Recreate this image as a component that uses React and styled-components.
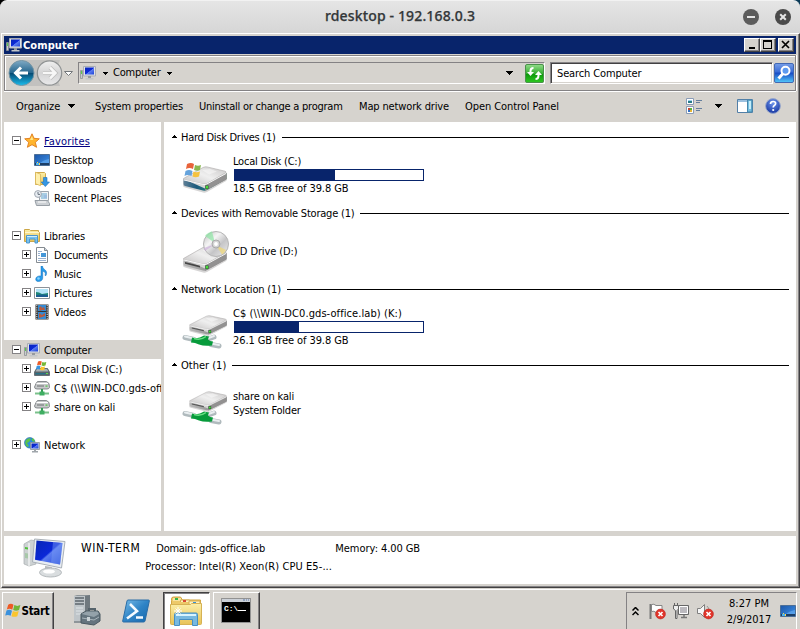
import React from 'react';
import styled, { createGlobalStyle, css } from 'styled-components';

const face = '#d6d3ce';
const navy = '#08246b';

const Global = createGlobalStyle`
  * { box-sizing: border-box; }
  html, body { margin: 0; padding: 0; background: #000; overflow: hidden; }
  body { font: 11px/14px "DejaVu Sans Condensed", "DejaVu Sans", sans-serif; font-stretch: condensed; color: #000; white-space: nowrap; }
  svg { display: block; flex: none; }
`;

const Desktop = styled.div`
  width: 800px; height: 629px; display: flex; flex-direction: column;
  background: ${face}; overflow: hidden;
`;
const HostBackdrop = styled.div`
  background: linear-gradient(90deg, #000 50%, #0b3a57 50%); height: 33px; flex: none;
`;
const HostBar = styled.header`
  height: 33px; border-radius: 7px 7px 0 0; padding: 0 9px 0 54px;
  border-top: 1px solid #f2f2f2;
  background: linear-gradient(#e5e5e5, #d6d6d6);
  display: grid; grid-template-columns: 1fr 50px; align-items: center;
`;
const HostTitle = styled.h1`
  margin: 0; padding: 0 0 2px 5px; text-align: center; color: #333739;
  font: 500 14px/20px "Noto Sans", "Open Sans", sans-serif;
  -webkit-text-stroke: 0.25px #333739; letter-spacing: 0.15px;
`;
const HostButtons = styled.div`display: flex; justify-content: space-between; margin-left: 2px;`;

const Window = styled.main`
  height: 555px; flex: none; padding: 2px; display: flex; flex-direction: column;
  border-style: solid; border-width: 1px;
  border-color: #fff #424142 #424142 #fff;
  box-shadow: inset -1px -1px #848284;
  margin-left: 1px; background: ${face};
`;
const Caption = styled.div`
  height: 18px; margin: 0 1px 0 0; flex: none; background: ${navy}; color: #fff; display: flex; align-items: center; padding: 0 2px;
  font-weight: 700;
`;
const CaptionText = styled.span`flex: 1; padding: 2px 0 0 1px; letter-spacing: 0.1px;`;
const CaptionButton = styled.button`
  width: 16px; height: 14px; padding: 0; background: ${face};
  border: 1px solid; border-color: #fff #424142 #424142 #fff;
  box-shadow: inset -1px -1px #848284; margin-left: ${p => p.$gap || 0}px;
  display: flex; align-items: center; justify-content: center;
`;
const AddressBand = styled.div`
  height: 36px; margin: 1px 1px 0 0; flex: none; display: flex; align-items: center;
  border: 1px solid #848284; box-shadow: inset 1px 1px #fff, 0 1px #fff, 1px 0 #fff;
  padding-left: 3px;
`;
const AddressField = styled.div`
  width: 467px; height: 22px; margin-left: 4px; display: flex; align-items: center;
  border: 1px solid; border-color: #848284 #fff #fff #848284; padding-left: 1px;
`;
const AddressText = styled.span`width: 49px; letter-spacing: -0.2px;`;
const Gap = styled.i`width: ${p => p.$w}px; flex: none;`;
const Stretch = styled.i`flex: 1;`;
const SearchField = styled.div`
  width: 223px; height: 22px; margin-left: 5px; background: #fff; padding: 4px 6px 0; letter-spacing: -0.13px;
  border: 1px solid; border-color: #848284 #fff #fff #848284; box-shadow: inset 1px 1px #424142, inset -1px -1px ${face};
`;
const CommandBar = styled.nav`
  height: 31px; flex: none; display: flex; align-items: center; padding: 0 16px 1px 12px;
`;
const Command = styled.span`width: ${p => p.$w}px; padding-top: 1px; letter-spacing: ${p => p.$ls || 0}px; flex: none;`;

const Body = styled.div`height: 409px; flex: none; display: flex; margin-right: 1px;`;
const NavPane = styled.aside`width: 157px; padding-top: 9px; background: #fff; overflow: hidden; flex: none;`;
const NavRow = styled.div`
  height: 19px; display: flex; align-items: center; overflow: hidden;
  padding-left: ${p => (p.$depth ? 18 : 8)}px; background: ${p => (p.$selected ? face : 'transparent')};
  margin-bottom: ${p => (p.$last ? 19 : 0)}px;
  svg + svg { margin-left: 3px; }
`;
const NavText = styled.span`
  padding: 2px 0 0 4px; letter-spacing: ${p => p.$ls || 0}px;
  ${p => p.$link && css`color: #000082; text-decoration: underline;`}
`;
const Content = styled.section`
  flex: 1; margin-left: 3px; padding: 6px 7px 0 8px; background: #fff;
`;
const Group = styled.section`height: 76px;`;
const GroupHead = styled.h2`
  margin: 0; height: 18px; display: flex; align-items: center; font: inherit;
  svg { margin: 0 4px 2px 0; }
  &::after { content: ''; flex: 1; height: 1px; background: #000; margin-left: 6px; }
`;
const Item = styled.article`height: 58px; display: flex; align-items: center; padding: 0 0 1px 9px;`;
const ItemInfo = styled.div`padding-left: 4px; width: 200px;`;
const Line = styled.div`letter-spacing: ${p => p.$ls || 0}px; padding-top: 1px; height: 14px;`;
const HeadText = styled.span`letter-spacing: ${p => p.$ls || 0}px; padding-top: 2px;`;
const Meter = styled.div`width: 190px; height: 12px; border: 1px solid ${navy}; margin: 1px 0 0 1px;`;
const MeterFill = styled.div`height: 100%; background: ${navy};`;

const Details = styled.footer`
  height: 48px; margin: 5px 1px 0 0; background: #fff; flex: none; display: flex; padding-left: 19px;
`;
const DetailName = styled.div`width: 61px; padding: 5px 0 0 14px; flex: none; font-size: 12px; letter-spacing: 0.55px;`;
const DetailGrid = styled.dl`
  margin: 0 0 0 16px; padding-top: 4px; display: grid; grid-template-columns: 52px 133px 43px 60px; grid-auto-rows: 18px; column-gap: 3px; line-height: 18px;
`;
const Term = styled.dt`text-align: right; letter-spacing: ${p => p.$ls || 0}px;`;
const Value = styled.dd`margin: 0; letter-spacing: ${p => p.$ls || 0}px;`;

const Taskbar = styled.div`
  height: 41px; margin-top: auto; flex: none; padding: 3px 3px 0 2px; border-top: 1px solid ${face};
  box-shadow: inset 0 1px #fff; background: ${face}; display: flex;
`;
const raised = css`border-color: #fff #424142 #424142 #fff; box-shadow: inset -1px 0 #848284;`;
const sunken = css`border-color: #424142 #fff #fff #424142; box-shadow: inset 1px 1px #848284; background: #fff;`;
const TaskButton = styled.button`
  width: ${p => p.$w || 47}px; height: 40px; border: 1px solid; background: ${face}; padding: 0 1px 3px 0;
  display: flex; justify-content: center; align-items: center; margin-right: ${p => p.$mr || 0}px;
  ${p => (p.$flat ? css`border-color: transparent;` : p.$active ? sunken : raised)}
`;
const StartText = styled.span`font: 700 11.5px/14px "DejaVu Sans Condensed", "DejaVu Sans", sans-serif; font-stretch: condensed; color: #000; letter-spacing: -0.3px; padding: 1px 1px 0 0;`;
const Tray = styled.div`
  width: 171px; height: 40px; border: 1px solid; border-color: #848284 #fff #fff #848284; margin-left: auto;
  display: flex; align-items: center; padding: 0 0 2px 5px;
`;
const Clock = styled.time`width: 67px; padding: 1px 0 0 4px; text-align: center; line-height: 16px;`;
const HiddenDefs = styled.svg`position: absolute;`;

/* Shared gradients */
const Defs = () => (
  <HiddenDefs width="0" height="0">
    <defs>
      <linearGradient id="screen" x1="0" y1="0" x2="1" y2="1"><stop offset="0" stopColor="#0726b5" /><stop offset=".5" stopColor="#0b28d8" /><stop offset=".55" stopColor="#5c7df0" /><stop offset="1" stopColor="#1c42d8" /></linearGradient>
      <linearGradient id="front" x1="0" y1="0" x2="1" y2="0"><stop offset="0" stopColor="#b9b9b9" /><stop offset="1" stopColor="#777" /></linearGradient>
      <linearGradient id="top" x1="0" y1="1" x2="1" y2="0"><stop offset="0" stopColor="#c5c3c3" /><stop offset=".5" stopColor="#efefef" /><stop offset="1" stopColor="#c9c7c7" /></linearGradient>
      <linearGradient id="folder" x1="0" y1="0" x2="0" y2="1"><stop offset="0" stopColor="#fcefa8" /><stop offset="1" stopColor="#e8c257" /></linearGradient>
      <linearGradient id="back" x1="0" y1="0" x2="0" y2="1"><stop offset="0" stopColor="#7fa9c4" /><stop offset=".48" stopColor="#28688f" /><stop offset=".5" stopColor="#06476f" /><stop offset="1" stopColor="#19bdee" /></linearGradient>
      <linearGradient id="fwd" x1="0" y1="0" x2="0" y2="1"><stop offset="0" stopColor="#f0f0f0" /><stop offset=".5" stopColor="#d4d4d5" /><stop offset="1" stopColor="#e9e9ea" /></linearGradient>
      <linearGradient id="green" x1="0" y1="0" x2="0" y2="1"><stop offset="0" stopColor="#93dd8b" /><stop offset=".5" stopColor="#35ae31" /><stop offset=".52" stopColor="#0c960c" /><stop offset="1" stopColor="#2fc922" /></linearGradient>
      <linearGradient id="find" x1="0" y1="0" x2="0" y2="1"><stop offset="0" stopColor="#779ee8" /><stop offset=".45" stopColor="#386bd6" /><stop offset=".5" stopColor="#1749c3" /><stop offset="1" stopColor="#52c9fb" /></linearGradient>
      <linearGradient id="desk" x1="0" y1="0" x2="1" y2="1"><stop offset="0" stopColor="#1c56a8" /><stop offset="1" stopColor="#3f93ea" /></linearGradient>
      <linearGradient id="ps" x1="0" y1="0" x2="1" y2="1"><stop offset="0" stopColor="#79bce8" /><stop offset=".5" stopColor="#2f84c6" /><stop offset="1" stopColor="#1667ac" /></linearGradient>
      <radialGradient id="help" cx=".5" cy=".3" r=".7"><stop offset="0" stopColor="#6e95ed" /><stop offset="1" stopColor="#1535a0" /></radialGradient>
      <linearGradient id="disc" x1="0" y1="0" x2="1" y2="1"><stop offset="0" stopColor="#b9b9b9" /><stop offset=".35" stopColor="#f5f5f5" /><stop offset=".6" stopColor="#c5c5c7" /><stop offset="1" stopColor="#eee" /></linearGradient>
      <linearGradient id="vista" x1="0" y1="0" x2="1" y2="0"><stop offset="0" stopColor="#5f7f96" /><stop offset=".3" stopColor="#1c5a7c" /><stop offset=".5" stopColor="#22727f" /><stop offset="1" stopColor="#31503b" /></linearGradient>
    </defs>
  </HiddenDefs>
);

const Svg = ({ w = 16, h = 16, vw, vh, children }) => (
  <svg width={w} height={h} viewBox={`0 0 ${vw || w} ${vh || h}`}>{children}</svg>
);
const Down = ({ w = 5 }) => (
  <Svg w={w} h={(w + 1) / 2}><path d={w === 7 ? 'M0 0h7v1H6v1H5v1H4v1H3V3H2V2H1V1H0z' : 'M0 0h5v1H4v1H3v1H2V2H1V1H0z'} fill="#000" shapeRendering="crispEdges" /></Svg>
);
const Up = () => <Svg w={5} h={3}><path d="M2 0h1v1h1v1h1v1H0V2h1V1h1z" fill="#000" shapeRendering="crispEdges" /></Svg>;

const MonitorIcon = () => (
  <Svg>
    <path d="M.5 5.5h2v8h-2z" fill="#c9ccce" stroke="#8d9194" strokeWidth=".8" /><path d="M1 6h1v3H1z" fill="#58cb4b" />
    <path d="M3.5 1.5h12v9.500h-12z" fill="#dfe2e6" stroke="#a9adb4" /><path d="M5 2.500h9v7H5z" fill="url(#screen)" />
    <path d="M8 11h3v2H8z" fill="#969a9f" /><path d="M5.500 13h8v1.500h-8z" fill="#c3c6c9" />
  </Svg>
);
const ToggleBox = ({ open }) => (
  <Svg w={9} h={9}><g shapeRendering="crispEdges"><path d="M.5.5h8v8h-8z" fill="#fff" stroke="#848284" /><path d={open ? 'M2 4h5v1H2z' : 'M2 4h5v1H2zM4 2h1v5H4z'} fill="#000" /></g></Svg>
);
const StarIcon = () => <Svg><path d="M8 .8l2 4.500 5.300.5-4 3.500 1.300 5L8 11.700 3.400 14.300l1.300-5L.7 5.800l5.300-.5z" fill="#ffb52e" stroke="#df7a1b" strokeWidth=".9" /><path d="M8 3L9.200 7H6z" fill="#ffe68a" /></Svg>;
const DesktopIcon = () => <Svg><path d="M.5 2.500h15v11H.5z" fill="url(#desk)" stroke="#4c6f97" /><path d="M5 12Q9 8 15 7v4.500H5z" fill="#62aaf0" opacity=".7" /><path d="M1 11h14v2H1z" fill="#1c3f68" /><path d="M3 10h1v1H3zM5 11h1v2H5z" fill="#ffd548" /><path d="M2 11h3v2H2z" fill="#4bb4ee" /></Svg>;
const DownloadsIcon = () => <Svg><path d="M1.500 1.500h9l1 1v11h-10z" fill="url(#folder)" stroke="#d2ab4d" /><path d="M1.500 1.200l5 2v11.500l-5-2z" fill="#fff0ad" stroke="#d8b558" strokeWidth=".8" /><path d="M9.500 6.500h3.500v4.500h2.500l-4.200 4.600-4.100-4.600h2.300z" fill="#3597e3" stroke="#1d71bd" strokeWidth=".6" /></Svg>;
const RecentIcon = () => <Svg><path d="M5.500 1.500h9v9h-9z" fill="#f2f4f6" stroke="#9da5ad" /><path d="M7 4h6M7 6h3M7 8h6" stroke="#5da5cf" /><path d="M10 5h3v3h-3z" fill="#9dbde1" /><path d="M1 10.500h12.500l2 3v2H2.500z" fill="#ccd0d4" stroke="#979ea5" /><path d="M4 12h8" stroke="#fff" /><circle cx="4" cy="4" r="3.400" fill="#e8edf2" stroke="#a0a7b0" /><path d="M4 2v2.400h2" fill="none" stroke="#66717e" /></Svg>;
const LibrariesIcon = () => <Svg><path d="M.5 1.500h5l1 1h8v2h1v9H.5z" fill="url(#folder)" stroke="#cca647" /><path d="M1 4.500h14" stroke="#fff7ce" /><path d="M2.500 7.500h11v7.500H11v-4H5.500v4h-3z" fill="#78c1ed" stroke="#4b96cd" /><path d="M3 8.500h10" stroke="#d0eefc" /></Svg>;
const DocumentIcon = () => <Svg><path d="M2.500.5h8l3 3v12h-11z" fill="#fff" stroke="#858b91" /><path d="M10.500.5v3h3" fill="#ccd6e0" stroke="#858b91" /><path d="M4 4.500h4M4 6.500h2M4 8.500h2M4 11.500h8M4 13.500h8" stroke="#9bb2cf" /><path d="M7 6h5v4H7z" fill="#4597d7" /></Svg>;
const MusicIcon = () => <Svg><path d="M7 0h1.500c0 4 6 3.500 3.500 9.500h-1c1-3-.5-4-2.300-4.300V12c0 4-7 5-7 1.200C1.700 10.500 5 9.500 7 10z" fill="#269bea" stroke="#156fba" strokeWidth=".5" /><circle cx="4.500" cy="12.500" r="1.300" fill="#84d2ff" /></Svg>;
const PicturesIcon = () => <Svg><path d="M.5 2.500h15v11H.5z" fill="#fff" stroke="#8c9298" /><path d="M2 4h12v8H2z" fill="#b2e3f7" /><path d="M2 7q3 0 6 2l6-1v4H2z" fill="#1f8779" /><path d="M2 10q6-1 12 0v2H2z" fill="#1b5d91" /></Svg>;
const VideosIcon = () => <Svg><path d="M1.500.5h13v15h-13z" fill="#333" /><path d="M4 1h8v6H4zM4 8h8v7H4z" fill="#338ad4" /><path d="M5 4l2-2 1 2 2-1 1 3H8L6 7zM5 9l3 2 3-2v3l-3 1-3 1z" fill="#b85b3e" /><path d="M2.800 1v14M13.200 1v14" stroke="#eee" strokeDasharray="1.200 1" /></Svg>;
const Flag = ({ s = 16 }) => (
  <Svg w={s} h={s} vw={16} vh={16}><path d="M3 2.500Q5.500 1 8 2.500L6.800 7.200Q4.300 5.700 1.700 7z" fill="#ee5a24" /><path d="M8.800 2.900q2.700 1.500 5.700 0l-1.300 4.700q-2.700 1.400-5.500 0z" fill="#72b536" /><path d="M1.400 8q2.700-1.300 5.200.2L5.300 13Q2.800 11.700.2 12.800z" fill="#3b91dc" /><path d="M7.400 8.500q2.800 1.300 5.500 0l-1.300 4.800q-2.700 1.200-5.500 0z" fill="#fbc52d" /></Svg>
);
const SmallDisk = () => <Svg><path d="M2.500 7.500h11l2 3.500v3.500H.5V11z" fill="#59646b" stroke="#48535a" strokeWidth=".7" /><path d="M3 8h10l1.500 2.500h-13z" fill="#aab1b5" /><path d="M1.500 12h10v1.500h-10z" fill="#287086" /><path d="M12 12h2v1h-2z" fill="#59dd4e" /><path d="M4 .5q2-1 3.800 0L6.800 4.200q-1.500-1-3.800 0z" fill="#ee5c26" /><path d="M8.300 1q1.700.8 4 0l-.8 3.500q-2 .9-4 0z" fill="#74b837" /><path d="M2.700 5q2-1 3.800 0l-.8 3.500q-1.700-1-3.800 0z" fill="#3994df" /><path d="M7 5.500q1.900.8 4 0L10.200 9Q8 9.700 6 8.800z" fill="#fbc52e" /></Svg>;
const SmallNetDisk = () => <Svg><path d="M2 3.500L3.500 1.500h9L15 3.500l.5 4Q15 9 13 9H3Q.5 9 .5 7z" fill="#c7c9ca" stroke="#707477" strokeWidth=".8" /><path d="M2.500 3.500h11.500" stroke="#fff" /><path d="M3 6h7" stroke="#6b6e70" /><path d="M11.500 5.500h2v1.200h-2z" fill="#48c83f" /><path d="M7 9h2v4H7z" fill="#339e53" /><path d="M1 12.500h14v2H1z" fill="#7ac18b" /><path d="M5.500 11.500h5v4h-5z" fill="#3fae62" /></Svg>;
const NetworkIcon = () => <Svg><circle cx="5.800" cy="5.800" r="5.300" fill="#2b8ed8" stroke="#2563a8" strokeWidth=".6" /><path d="M2 3q3-3 5-1L5 5l-2 1 2 3-2 1Q0 6 2 3zM8 1l2 1 1 3-3-1z" fill="#5cc24a" /><path d="M6.500 5.500h9v7h-9z" fill="#d5dade" stroke="#868d94" strokeWidth=".8" /><path d="M7.500 6.500h7v5h-7z" fill="url(#screen)" /><path d="M10 13h2v1h2v1.500H8V14h2z" fill="#a0a6ab" /></Svg>;

const DriveBody = ({ vista }) => (
  <g>
    <path d="M4 15L25 4q1-.6 2-.3l17 5q1.500.4 1.500 1.500v5.500L26 27q-2 1-4 .6L4 22.500q-2-.5-2-2V16z" fill="#8a8888" opacity=".35" transform="translate(0 1)" />
    <path d="M2.500 15L24 24.500 45.500 9v6L26 26q-2 1-4 .5L4 22q-1.500-.5-1.500-2z" fill={vista ? 'url(#vista)' : 'url(#front)'} />
    <path d="M24 20L45.500 9v6.500L24 27z" fill="#929191" />
    <path d="M2.500 14.500L22 3.500q2-1 4-.6l18 4.300q2 .7.500 1.700L26 19.500q-2 1-4 .6L3 15.800z" fill="url(#top)" stroke="#a9a6a6" strokeWidth=".6" />
    <path d="M3 16l19 4.400q2 .5 4-.5L45 9.500" fill="none" stroke="#f8f8f8" />
    <path d="M21 6l8-1 7 2.500-8 3z" fill="#fff" opacity=".45" />
    <path d="M24.500 21.500h3v3.600h-3z" fill="#1c5823" /><path d="M25 22h2v2.500h-2z" fill="#48de3a" />
  </g>
);
const WinDrive = () => (
  <Svg w={48} h={48}><g transform="translate(0 13)"><DriveBody vista /></g>
    <g transform="translate(1 11)"><path d="M5 2q4-2 7 0l-1 5q-3.500-2-7 0z" fill="#e8633b" /><path d="M13 3q3 1.500 6 0l-1 5q-3 1.500-6 0z" fill="#8ab850" /><path d="M3.500 9q3.500-2 7 0l-1 5q-4-2-7 0z" fill="#65a3dc" /><path d="M11.500 9.500q3 1.500 6.500 0l-1 5q-3.500 1.500-6.500 0z" fill="#f5c23e" /></g>
  </Svg>
);
const CdDrive = () => (
  <Svg w={48} h={48}>
    <g transform="translate(0 17)"><DriveBody /><path d="M4 18l15 3.800v1.600L4 19.800z" fill="#454545" /></g>
    <ellipse cx="35" cy="17" rx="12.500" ry="12.500" fill="url(#disc)" stroke="#b5b5b5" />
    <path d="M34 16L24 9q3-4 7-4.500z" fill="#8ee6a5" opacity=".7" /><path d="M35 18l10 5q-2 4-4 4.500z" fill="#f3d96d" opacity=".65" /><path d="M34 17l-11 4 1 3z" fill="#c8a8d9" opacity=".6" />
    <circle cx="35" cy="17" r="4" fill="#d4d4d4" stroke="#aaa" /><circle cx="35" cy="17" r="1.900" fill="#fff" />
  </Svg>
);
const NetDrive = () => (
  <Svg w={48} h={48}>
    <g transform="translate(0 8.500)">
      <g transform="translate(6.500 2) scale(.86 .78)"><DriveBody /><path d="M5 18l14 3.300v1.500L5 19.300z" fill="#555" /></g>
      <path d="M4 26L13 28M30 33l8 1.500M26 28l7-2.500" stroke="#b0babd" strokeWidth="5" strokeLinecap="round" /><path d="M4 25L13 27M30 32l8 1.500M26 27l7-2.500" stroke="#e9eef0" strokeWidth="2" strokeLinecap="round" />
      <path d="M11 26q6 2 12-2l5 1-1 3q2 2 5 2l-1 4q-8 1-13-1-4-2-8-2z" fill="#079b3b" /><path d="M13 27q7 2 12-2" stroke="#68df83" strokeWidth="1.500" fill="none" />
    </g>
  </Svg>
);
const BigComputer = () => (
  <Svg w={44} h={42}>
    <path d="M1 8l7-4 5 1v23l-7 2-5-2z" fill="#cdd2d3" stroke="#a7adaf" strokeWidth=".7" /><path d="M6 7v23" stroke="#fff" /><path d="M2 11l3 .5v2L2 13z" fill="#50bf3a" /><path d="M2 17l3 .5v5L2 22z" fill="#a7c8a9" />
    <path d="M11.500 3L42 5.500 38.500 32 9.500 26z" fill="#e8edf2" stroke="#aab1b8" />
    <path d="M13.500 4.500L39.500 7 37 28.500 12 23.800z" fill="url(#screen)" /><path d="M30 6l9.500 1L37 28.500 28 27z" fill="#7b9df5" opacity=".45" />
    <path d="M22 30l7 1-1 5h-6z" fill="#b6babe" /><ellipse cx="27.500" cy="36.500" rx="11" ry="4.500" fill="#d9dddf" stroke="#b4b9bc" /><ellipse cx="26" cy="35.500" rx="6" ry="2" fill="#fff" />
  </Svg>
);
const HostButton = ({ close }) => (
  <Svg w={16} h={16}><circle cx="8" cy="8" r="8" fill={close ? '#4a4a4a' : '#5c5c5c'} /><path d={close ? 'M5.200 5.200l5.600 5.600M10.800 5.200l-5.600 5.600' : 'M4 8h8'} stroke="#e5e5e5" strokeWidth="2" /></Svg>
);
const NavButtons = () => (
  <Svg w={66} h={28}>
    <path d="M14 1h38q-6 13 0 26H14z" fill="#b4b6b6" opacity=".6" />
    <circle cx="13.500" cy="14" r="12.500" fill="url(#back)" stroke="#7394a4" />
    <path d="M20 14H8M13 8.500L7.500 14l5.500 5.500" fill="none" stroke="#fff" strokeWidth="3" />
    <circle cx="41.500" cy="14" r="12.200" fill="url(#fwd)" stroke="#8f9293" strokeWidth="1.200" />
    <path d="M35 14h12M42 8.500l5.500 5.500-5.500 5.500" fill="none" stroke="#bcbcbc" strokeWidth="4" /><path d="M35 14h12M42 8.500l5.500 5.500-5.500 5.500" fill="none" stroke="#f7f7f7" strokeWidth="2.500" />
    <path d="M56.500 12.500h8l-4 4z" fill="#fff" stroke="#74787b" />
  </Svg>
);
const RefreshIcon = () => <Svg w={19} h={19}><rect x=".5" y=".5" width="18" height="18" rx="1.500" fill="url(#green)" stroke="#4a914b" /><path d="M8.500 4Q5.500 4 5.500 7v2M10.500 15q3 0 3-3.500v-1" fill="none" stroke="#fff" strokeWidth="2" /><path d="M2 8h7l-3.500 4zM10 11h7l-3.500-4z" fill="#fff" /></Svg>;
const FindIcon = () => <Svg w={20} h={20}><rect x=".5" y=".5" width="19" height="19" rx="1.500" fill="url(#find)" stroke="#4268b3" /><path d="M4.500 15.500l4.500-5" stroke="#fff" strokeWidth="3" /><circle cx="11.500" cy="7.800" r="4" fill="#5d9af0" stroke="#fff" strokeWidth="2" /></Svg>;
const ViewsIcon = () => <Svg><path d="M.5.5h7v6h-7zM.5 8.500h7v7h-7z" fill="#fff" stroke="#8a9cb7" /><path d="M2 2h4v1H2z" fill="#9bd3ef" /><path d="M2 3h4v2H2z" fill="#267a87" /><path d="M2 10h2v2H2z" fill="#c34733" /><path d="M4 10h2v2H4z" fill="#5baf39" /><path d="M2 12h2v2H2z" fill="#326fc4" /><path d="M4 12h2v2H4z" fill="#e5b531" /><path d="M10 2.500h6M10 4.500h4M10 10.500h6M10 12.500h4" stroke="#647e9d" /></Svg>;
const PreviewIcon = () => <Svg h={14}><path d="M.5.5h15v13H.5z" fill="#fff" stroke="#527fa7" /><path d="M1 2h9" stroke="#9cc1df" strokeWidth="2" /><path d="M10.500 1h4.500v12h-4.500z" fill="#76bfe0" stroke="#4587ac" /><path d="M12 2h2v8h-2z" fill="#c5eefa" /></Svg>;
const HelpIcon = () => <Svg><circle cx="8" cy="8" r="7.400" fill="url(#help)" stroke="#9aa9cc" /><path d="M5.500 6q0-2.500 2.600-2.500 2.500 0 2.500 2 0 1.300-1.300 2-1.100.7-1.100 2" fill="none" stroke="#fff" strokeWidth="1.700" /><circle cx="8.200" cy="12" r="1.100" fill="#fff" /></Svg>;

const ServerIcon = () => (
  <Svg w={30} h={33}><path d="M2 2l3-1h13v26l-3 2H2z" fill="#8e9599" /><path d="M2 2h11v25H2z" fill="#bfc5c9" /><path d="M3 4h9M3 7h9M3 10h9" stroke="#5f676d" strokeWidth="1.500" /><path d="M4 14h7M4 17h7M4 20h7" stroke="#dfe4e7" /><path d="M13 2l5-1v20l-5 2z" fill="#70797f" />
    <path d="M17 18v-3h6v3" fill="none" stroke="#56636b" strokeWidth="2" /><path d="M9 20l5-3h12l2 3v7l-6 4-13-2z" fill="#64747e" stroke="#485860" /><path d="M9.500 20l5-2.500h11l1.500 2.500-5 3z" fill="#94a2aa" /><path d="M10 24l12 2 5-3" fill="none" stroke="#a8b4ba" /><path d="M15 23h3v4h-3z" fill="#c9d2d6" /></Svg>
);
const PowerShellIcon = () => <Svg w={28} h={24}><path d="M6 1h20.500q1 0 .8 1L23 22q-.3 1-1.300 1H1.500q-1 0-.8-1L5 2q.2-1 1-1z" fill="url(#ps)" stroke="#2a6ca6" /><path d="M8 5l7 7-10 7.500M14 18.500h7" fill="none" stroke="#f4faff" strokeWidth="2.600" /></Svg>;
const ExplorerIcon = () => (
  <Svg w={34} h={32}><path d="M2.500 5.500V4q0-2 2-2h7l2 3h18v22h-29z" fill="#edc969" stroke="#d1a541" /><path d="M4 3h8v3H4z" fill="#f7e3a2" /><path d="M6 3h3v2H6z" fill="#37b34a" /><path d="M11.500 7V5h9l1 2" fill="#fff2be" stroke="#d6ad53" /><path d="M14 5h3v2h-3z" fill="#d94a35" /><path d="M20 9V6h11v4" fill="#fff2be" stroke="#d6ad53" /><path d="M24 7h3v2h-3z" fill="#3592d5" /><path d="M1.500 9.500h20l1-1h10v20q0 1-1 1h-29q-1 0-1-1z" fill="url(#folder)" stroke="#d6b254" /><path d="M5.500 19.500q0-1.500 1.500-1.500h20q1.500 0 1.500 1.500v11h-5v-6h-13v6h-5z" fill="#78b9e0" stroke="#478fc2" /><path d="M7 20h20" stroke="#d8f4ff" strokeWidth="2" /><path d="M9 12v8M5 16h8M6.500 13.500l5 5M11.500 13.500l-5 5" stroke="#fff" /></Svg>
);
const CmdText = styled.text`font: 700 8px "Liberation Mono", monospace; fill: #fff;`;
const CmdIcon = () => <Svg w={30} h={25}><path d="M.5.5h29v24H.5z" fill="#000" stroke="#929292" /><path d="M1 1h28v3H1z" fill="#cbd0d7" /><path d="M22 2h2M25 2h1M27 2h1" stroke="#5d78ac" /><CmdText x="3" y="13">C:\</CmdText><path d="M17 12.500h8" stroke="#fff" /></Svg>;
const Chevrons = () => <Svg w={7} h={9}><path d="M.5 3.500l3-3 3 3M.5 8l3-3 3 3" fill="none" stroke="#000" strokeWidth="1.500" /></Svg>;
const Bad = () => <g><circle cx="11.500" cy="11" r="4.900" fill="#e1352b" stroke="#b92720" strokeWidth=".6" /><path d="M9.500 9l4 4M13.500 9l-4 4" stroke="#fff" strokeWidth="1.700" /></g>;
const FlagAlert = () => <Svg w={17} h={17}><path d="M1.500 1v15" stroke="#787878" strokeWidth="2" /><path d="M2.500 1.500Q5 .5 7 2.500h6v7H7Q5 7.500 2.500 8.500z" fill="#fff" stroke="#858585" /><Bad /></Svg>;
const NetTray = () => <Svg w={17} h={17}><path d="M5.500 2.500h10v9h-10z" fill="#bbb9be" stroke="#666" /><path d="M6.500 3.500h8v7h-8z" fill="none" stroke="#fff" /><path d="M8 14.500h6M11 12v2" stroke="#777" strokeWidth="1.500" /><path d="M.5 2.500h5V6L4 7.500v8H2.500v-8L.5 6z" fill="#eee" stroke="#666" /><path d="M1.500 0v3M4.500 0v3" stroke="#666" /></Svg>;
const SpeakerTray = () => <Svg w={17} h={17}><path d="M.5 5.500h3l4-4v13l-4-4h-3z" fill="#f7f7f7" stroke="#808080" /><path d="M10 3q2 2 2 4" fill="none" stroke="#999" /><Bad /></Svg>;

const nav = [
  { t: 'Favorites', icon: StarIcon, open: true, link: true, ls: 0.15 },
  { t: 'Desktop', icon: DesktopIcon, leaf: true, ls: -0.22 },
  { t: 'Downloads', icon: DownloadsIcon, leaf: true, ls: -0.22 },
  { t: 'Recent Places', icon: RecentIcon, leaf: true, last: true, ls: -0.1 },
  { t: 'Libraries', icon: LibrariesIcon, open: true, ls: -0.2 },
  { t: 'Documents', icon: DocumentIcon, depth: 1, ls: -0.33 },
  { t: 'Music', icon: MusicIcon, depth: 1, ls: -0.2 },
  { t: 'Pictures', icon: PicturesIcon, depth: 1, ls: -0.12 },
  { t: 'Videos', icon: VideosIcon, depth: 1, last: true, ls: -0.15 },
  { t: 'Computer', icon: MonitorIcon, open: true, selected: true, ls: -0.25 },
  { t: 'Local Disk (C:)', icon: SmallDisk, depth: 1, ls: -0.2 },
  { t: 'C$ (\\\\WIN-DC0.gds-office.lab) (K:)', icon: SmallNetDisk, depth: 1 },
  { t: 'share on kali', icon: SmallNetDisk, depth: 1, last: true, ls: -0.16 },
  { t: 'Network', icon: NetworkIcon },
];
const groups = [
  { t: 'Hard Disk Drives (1)', ls: -0.27, icon: WinDrive, name: 'Local Disk (C:)', nls: -0.2, used: 101, note: '18.5 GB free of 39.8 GB', ols: -0.1 },
  { t: 'Devices with Removable Storage (1)', ls: -0.21, icon: CdDrive, name: 'CD Drive (D:)', nls: -0.1 },
  { t: 'Network Location (1)', ls: -0.18, icon: NetDrive, name: 'C$ (\\\\WIN-DC0.gds-office.lab) (K:)', nls: 0.08, used: 65, note: '26.1 GB free of 39.8 GB', ols: -0.1 },
  { t: 'Other (1)', ls: 0, icon: NetDrive, name: 'share on kali', nls: -0.16, note: 'System Folder', ols: -0.23 },
];

export default function App() {
  return (
    <Desktop>
      <Global /><Defs />
      <HostBackdrop>
        <HostBar>
          <HostTitle>rdesktop - 192.168.0.3</HostTitle>
          <HostButtons><HostButton /><HostButton close /></HostButtons>
        </HostBar>
      </HostBackdrop>
      <Window>
        <Caption>
          <MonitorIcon /><CaptionText>Computer</CaptionText>
          <CaptionButton><Svg w={12} h={10}><path d="M3 7h6v2H3z" fill="#000" /></Svg></CaptionButton>
          <CaptionButton><Svg w={12} h={10}><path d="M1 0h9v9H1zM2 2v6h7V2z" fillRule="evenodd" fill="#000" /></Svg></CaptionButton>
          <CaptionButton $gap={2}><Svg w={12} h={10}><path d="M2 1l7 7M9 1L2 8" stroke="#000" strokeWidth="1.700" /></Svg></CaptionButton>
        </Caption>
        <AddressBand>
          <NavButtons />
          <AddressField>
            <MonitorIcon /><Gap $w={7} /><Down /><Gap $w={5} /><AddressText>Computer</AddressText><Gap $w={5} /><Down />
            <Stretch /><Down w={7} /><Gap $w={12} /><RefreshIcon />
          </AddressField>
          <SearchField>Search Computer</SearchField>
          <Gap $w={1} /><FindIcon />
        </AddressBand>
        <CommandBar>
          <Command $w={52}>Organize</Command><Down w={7} /><Gap $w={20} />
          <Command $w={104} $ls={-0.15}>System properties</Command>
          <Command $w={160} $ls={-0.24}>Uninstall or change a program</Command>
          <Command $w={106} $ls={-0.14}>Map network drive</Command>
          <Command $w={100} $ls={-0.07}>Open Control Panel</Command>
          <Stretch /><ViewsIcon /><Gap $w={13} /><Down w={7} /><Gap $w={15} /><PreviewIcon /><Gap $w={12} /><HelpIcon />
        </CommandBar>
        <Body>
          <NavPane>
            {nav.map(({ t, icon: Icon, ...n }) => (
              <NavRow key={t} $depth={n.depth} $selected={n.selected} $last={n.last}>
                {n.leaf ? <Gap $w={22} /> : <ToggleBox open={n.open} />}
                <Icon /><NavText $link={n.link} $ls={n.ls}>{t}</NavText>
              </NavRow>
            ))}
          </NavPane>
          <Content>
            {groups.map(({ icon: Icon, ...g }) => (
              <Group key={g.t}>
                <GroupHead><Up /><HeadText $ls={g.ls}>{g.t}</HeadText></GroupHead>
                <Item>
                  <Icon />
                  <ItemInfo>
                    <Line $ls={g.nls}>{g.name}</Line>
                    {g.used && <Meter><MeterFill style={{ width: g.used - 1 }} /></Meter>}
                    {g.note && <Line $ls={g.ols}>{g.note}</Line>}
                  </ItemInfo>
                </Item>
              </Group>
            ))}
          </Content>
        </Body>
        <Details>
          <BigComputer />
          <DetailName>WIN-TERM</DetailName>
          <DetailGrid>
            <Term $ls={-0.3}>Domain:</Term><Value $ls={-0.05}>gds-office.lab</Value><Term>Memory:</Term><Value $ls={-0.1}>4.00 GB</Value>
            <Term>Processor:</Term><Value $ls={0.08}>Intel(R) Xeon(R) CPU E5-...</Value>
          </DetailGrid>
        </Details>
      </Window>
      <Taskbar>
        <TaskButton $w={52} $mr={10}><Flag s={17} /><StartText>Start</StartText></TaskButton>
        <TaskButton $flat $mr={2}><ServerIcon /></TaskButton>
        <TaskButton $flat $mr={3}><PowerShellIcon /></TaskButton>
        <TaskButton $active $mr={3}><ExplorerIcon /></TaskButton>
        <TaskButton><CmdIcon /></TaskButton>
        <Tray>
          <Chevrons /><Gap $w={10} /><FlagAlert /><Gap $w={7} /><NetTray /><Gap $w={7} /><SpeakerTray />
          <Clock>8:27 PM<br />2/9/2017</Clock><DesktopIcon />
        </Tray>
      </Taskbar>
    </Desktop>
  );
}
